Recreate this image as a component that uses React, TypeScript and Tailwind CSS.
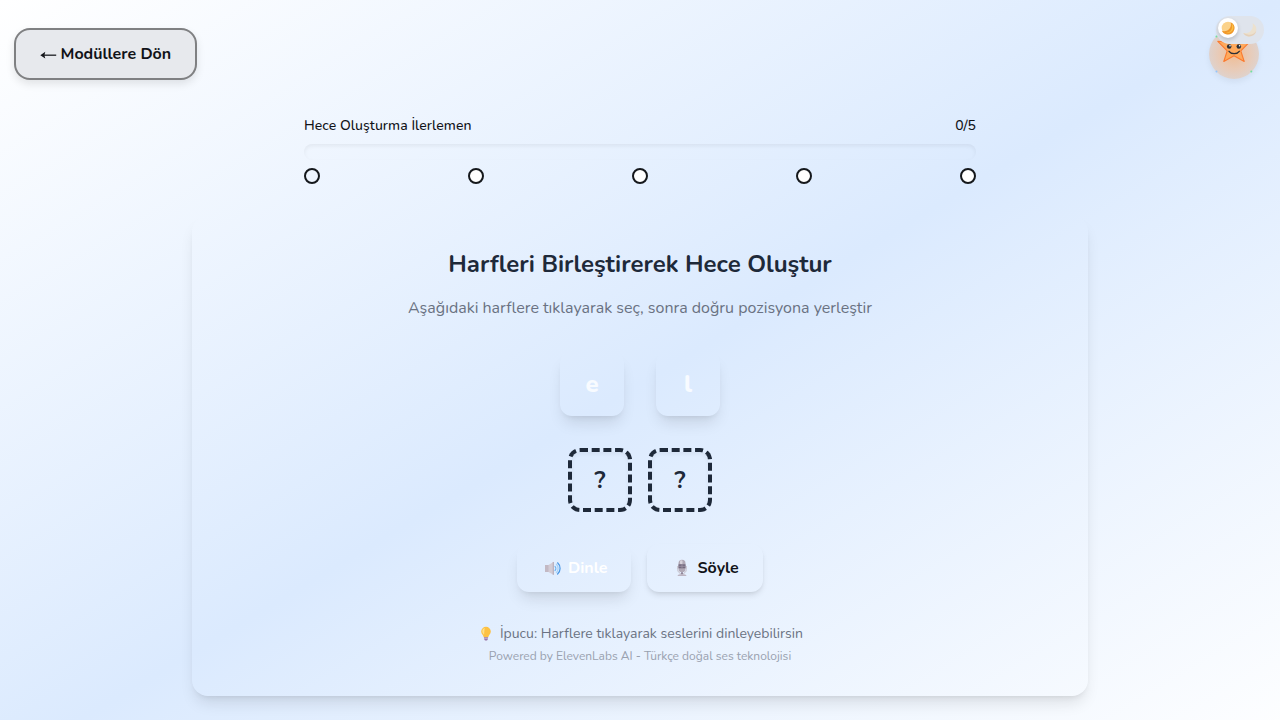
import type { ReactNode } from 'react';

function ArrowLeftIcon() {
  return (
    <svg viewBox="0 0 17 10" className="mt-[3px] h-2.5 w-[17px]" aria-label="←">
      <path d="M3.500 5.200H16.200" stroke="#2a2c31" strokeWidth="1.400" />
      <path d="M.3 5.200 5.300 1.800 4.400 5.200 5.300 8.600Z" fill="#15171b" />
    </svg>
  );
}

function GibbousMoonIcon() {
  return (
    <svg viewBox="0 0 16 16" className="size-4" aria-hidden="true">
      <circle cx="8" cy="8" r="6.300" fill="#fbd28a" />
      <path d="M10.600 2.200c3 1.300 4.400 4 3.800 7-.8 3.700-4.100 5.600-7.400 5.200-2.500-.3-4.300-1.600-5.200-3.600 3.200 1 6.300-.1 8-2.600 1.300-1.900 1.500-4 .8-6z" fill="#f0982a" />
      <path d="M11.600 3.600c1.700 1.500 2.200 3.300 1.700 5.100-.8 2.900-3.700 4.700-7.300 4.400 3.600-.6 5.600-2.700 6-5.300.2-1.500.1-2.900-.4-4.200z" fill="#fbc044" />
    </svg>
  );
}

function CrescentMoonIcon() {
  return (
    <svg viewBox="0 0 16 16" className="size-4 opacity-60" aria-hidden="true">
      <path d="M10.500 1.200c3 1.500 4.500 4.500 3.700 7.800-.9 3.700-4.200 5.800-7.700 5.400-2.500-.3-4.300-1.500-5.200-3.400 4 .6 7.200-.9 8.700-3.800 1-2 1.200-4.100.5-6z" fill="#f6e0bb" />
      <path d="M1.300 11c.9 1.900 2.700 3.100 5.200 3.400 3.500.4 6.800-1.700 7.700-5.400-1.700 2.700-4.400 4-7.400 3.700-2.100-.2-3.900-.8-5.500-1.700z" fill="#e8c398" />
    </svg>
  );
}

function SpeakerIcon() {
  return (
    <svg viewBox="0 0 18 18" className="size-[18px]" aria-hidden="true">
      <path d="M1 6h4v7H1z" fill="#c3b9c4" />
      <path d="M4.500 6 9.800 2.800v13.200L4.500 13z" fill="#d3ccd5" />
      <path d="M9.300 3v12.700" stroke="#b8aebb" strokeWidth="1.200" />
      <g fill="none" strokeLinecap="round">
        <path d="M11 7.300c1.100 1.100 1.100 3.100 0 4.200" stroke="#6fb4f2" strokeWidth="1.200" />
        <path d="M12.400 5.300c2.200 2.200 2.200 6 0 8.200" stroke="#a9d2f7" strokeWidth="1.300" />
        <path d="M13.600 3.800c3.300 3 3.300 8.200 0 11.200" stroke="#4a98e6" strokeWidth="1.200" />
      </g>
    </svg>
  );
}

function MicIcon() {
  return (
    <svg viewBox="0 0 18 18" className="size-[18px]" aria-hidden="true">
      <path d="M4.700 7v3.500a4.300 4.300 0 0 0 8.600 0V7" fill="none" stroke="#c6c0ca" strokeWidth="1" />
      <rect x="5.500" y=".8" width="7" height="12.500" rx="3.500" fill="#b1a9b6" />
      <rect x="7" y="1.300" width="2.500" height="3.800" rx="1.200" fill="#d8d3db" />
      <path d="M5.500 5.300h7v4h-7z" fill="#756b7e" />
      <path d="M5.500 7.300h7M9 5.300v4" stroke="#a49bab" strokeWidth=".7" />
      <path d="M8 13.200h2v2.300H8z" fill="#91879a" />
      <path d="M4.500 17c0-1.300 1.900-2 4.500-2s4.500.7 4.500 2z" fill="#bdb5c2" />
    </svg>
  );
}

function BulbIcon() {
  return (
    <svg viewBox="0 0 14 16" className="h-4 w-3.5" aria-hidden="true">
      <path d="M7 .8a4.800 4.800 0 0 0-4.800 4.800c0 2 1.400 3 2 4.200.3.600.3 1 .4 1.500h4.800c.1-.5.1-.9.400-1.500.6-1.200 2-2.200 2-4.200A4.800 4.800 0 0 0 7 .8z" fill="#fdc143" />
      <path d="M5.800 2c-1.700.5-2.600 1.900-2.500 3.600.1 1.400 1 2.100 1.700 3.200.5-2.300.2-4.800.8-6.800z" fill="#ffe08a" />
      <path d="M5 11.300h4v1.800l-1 1.300H6l-1-1.300z" fill="#9a78a8" />
      <path d="M5 12.500h4" stroke="#cdb9d6" strokeWidth=".7" />
    </svg>
  );
}

function StarMascot() {
  return (
    <svg viewBox="0 0 50 50" className="size-full" aria-hidden="true">
      <path
        d="M25 2.500 29.500 13.500 41.200 12.300 31.800 21.800 35.200 32.500 25 26.800 14.800 32.500 18.200 21.800 8.800 12.300 20.500 13.500Z"
        fill="#ffa95c"
        stroke="#fb7a2e"
        strokeWidth="1.100"
        strokeLinejoin="round"
      />
      <circle cx="20.200" cy="17.500" r="2.300" fill="#2b3038" />
      <circle cx="29.800" cy="17.500" r="2.300" fill="#2b3038" />
      <circle cx="21" cy="16.700" r=".8" fill="#fff" />
      <circle cx="30.600" cy="16.700" r=".8" fill="#fff" />
      <path d="M20 22.300c2.300 3.200 8 3.200 10.300 0" fill="none" stroke="#2b3038" strokeWidth="1.300" strokeLinecap="round" />
      <circle cx="7.500" cy="7.500" r="1" fill="#6fe3a0" />
      <circle cx="42.300" cy="42.500" r="1" fill="#6fe3a0" />
      <circle cx="7.500" cy="42.500" r="1" fill="#93c5fd" />
    </svg>
  );
}

function LetterTile({ children }: { children: ReactNode }) {
  return (
    <button className="size-16 rounded-xl text-2xl font-extrabold text-white/80 shadow-[0_10px_15px_-3px_rgba(0,0,0,0.1),0_4px_6px_-4px_rgba(0,0,0,0.1)]">
      {children}
    </button>
  );
}

function Slot() {
  return (
    <div className="flex size-16 items-center justify-center rounded-xl border-4 border-dashed border-gray-800 text-2xl font-bold text-gray-800 shadow-[inset_0_2px_4px_rgba(0,0,0,0.05)]">
      ?
    </div>
  );
}

const steps = [1, 2, 3, 4, 5];

export default function App() {
  return (
    <div className="relative h-[720px] overflow-hidden bg-[linear-gradient(to_bottom_right,#ffffff,#dbeafe,#ffffff)] bg-[length:1280px_768px] [font-family:Nunito,'Open_Sans',sans-serif]">
      <button className="absolute top-7 left-3.5 flex h-[52px] w-[183px] items-center rounded-2xl border-2 border-black/45 bg-[#e7e9ed] pb-px pl-6 text-base font-bold text-[#111318] shadow-[0_4px_8px_rgba(0,0,0,0.1)]">
        <ArrowLeftIcon />
        <span className="ml-[3.500px]">Modüllere Dön</span>
      </button>

      <div className="absolute top-[29px] left-[1209px] size-[50px] rounded-full bg-[radial-gradient(circle_closest-side,rgba(255,150,60,0.55)_0%,rgba(245,170,110,0.5)_60%,rgba(225,185,155,0.5)_100%)] shadow-[0_3px_6px_rgba(0,0,0,0.06)]">
        <StarMascot />
      </div>
      <div className="absolute top-4 left-[1216px] flex h-7 w-12 rounded-[14px] bg-[#dfe4ec]">
        <span className="mt-0.5 ml-0.5 flex size-5 items-center justify-center rounded-full bg-white shadow-[0_2px_4px_rgba(0,0,0,0.18)]">
          <GibbousMoonIcon />
        </span>
        <span className="mt-[6px] ml-[4px]">
          <CrescentMoonIcon />
        </span>
      </div>

      <main className="pt-[116px]">
        <section className="mx-auto w-[672px]">
          <div className="flex h-5 items-center justify-between text-sm font-medium text-[#111318]">
            <span className="tracking-[0.06px]">Hece Oluşturma İlerlemen</span>
            <span>0/5</span>
          </div>
          <div className="mt-2 h-4 rounded-full shadow-[inset_0_2px_4px_rgba(0,0,0,0.06)]" />
          <div className="mt-2 flex justify-between">
            {steps.map((step) => (
              <span
                key={step}
                className={`size-4 rounded-full border-2 border-[#15181c] ${step === 1 ? 'bg-transparent' : 'bg-white'}`}
              />
            ))}
          </div>
        </section>

        <section className="mx-auto mt-8 flex h-[480px] w-[896px] flex-col items-center rounded-2xl p-8 shadow-[0_10px_15px_-3px_rgba(0,0,0,0.1),0_4px_6px_-4px_rgba(0,0,0,0.1)]">
          <h2 className="text-2xl font-bold text-gray-800">Harfleri Birleştirerek Hece Oluştur</h2>
          <p className="mt-4 text-base text-gray-500">
            Aşağıdaki harflere tıklayarak seç, sonra doğru pozisyona yerleştir
          </p>

          <div className="mt-8 flex gap-8">
            <LetterTile>e</LetterTile>
            <LetterTile>l</LetterTile>
          </div>
          <div className="mt-8 flex gap-4">
            <Slot />
            <Slot />
          </div>

          <div className="mt-8 flex gap-4">
            <button className="flex h-12 w-[114px] items-center rounded-xl pl-[27px] text-base font-bold text-white shadow-[0_10px_15px_-3px_rgba(0,0,0,0.1),0_4px_6px_-4px_rgba(0,0,0,0.1)]">
              <SpeakerIcon />
              <span className="ml-1.5">Dinle</span>
            </button>
            <button className="flex h-12 w-[116px] items-center rounded-xl pl-[26px] text-base font-bold text-[#111318] shadow-[0_4px_6px_-1px_rgba(0,0,0,0.1),0_2px_4px_-2px_rgba(0,0,0,0.1)]">
              <MicIcon />
              <span className="ml-[6.500px]">Söyle</span>
            </button>
          </div>

          <p className="mt-8 flex h-5 items-center pl-0.5 text-sm text-gray-500">
            <BulbIcon />
            <span className="ml-[7px]">İpucu: Harflere tıklayarak seslerini dinleyebilirsin</span>
          </p>
          <p className="mt-1 text-xs text-gray-400">Powered by ElevenLabs AI - Türkçe doğal ses teknolojisi</p>
        </section>
      </main>
    </div>
  );
}
